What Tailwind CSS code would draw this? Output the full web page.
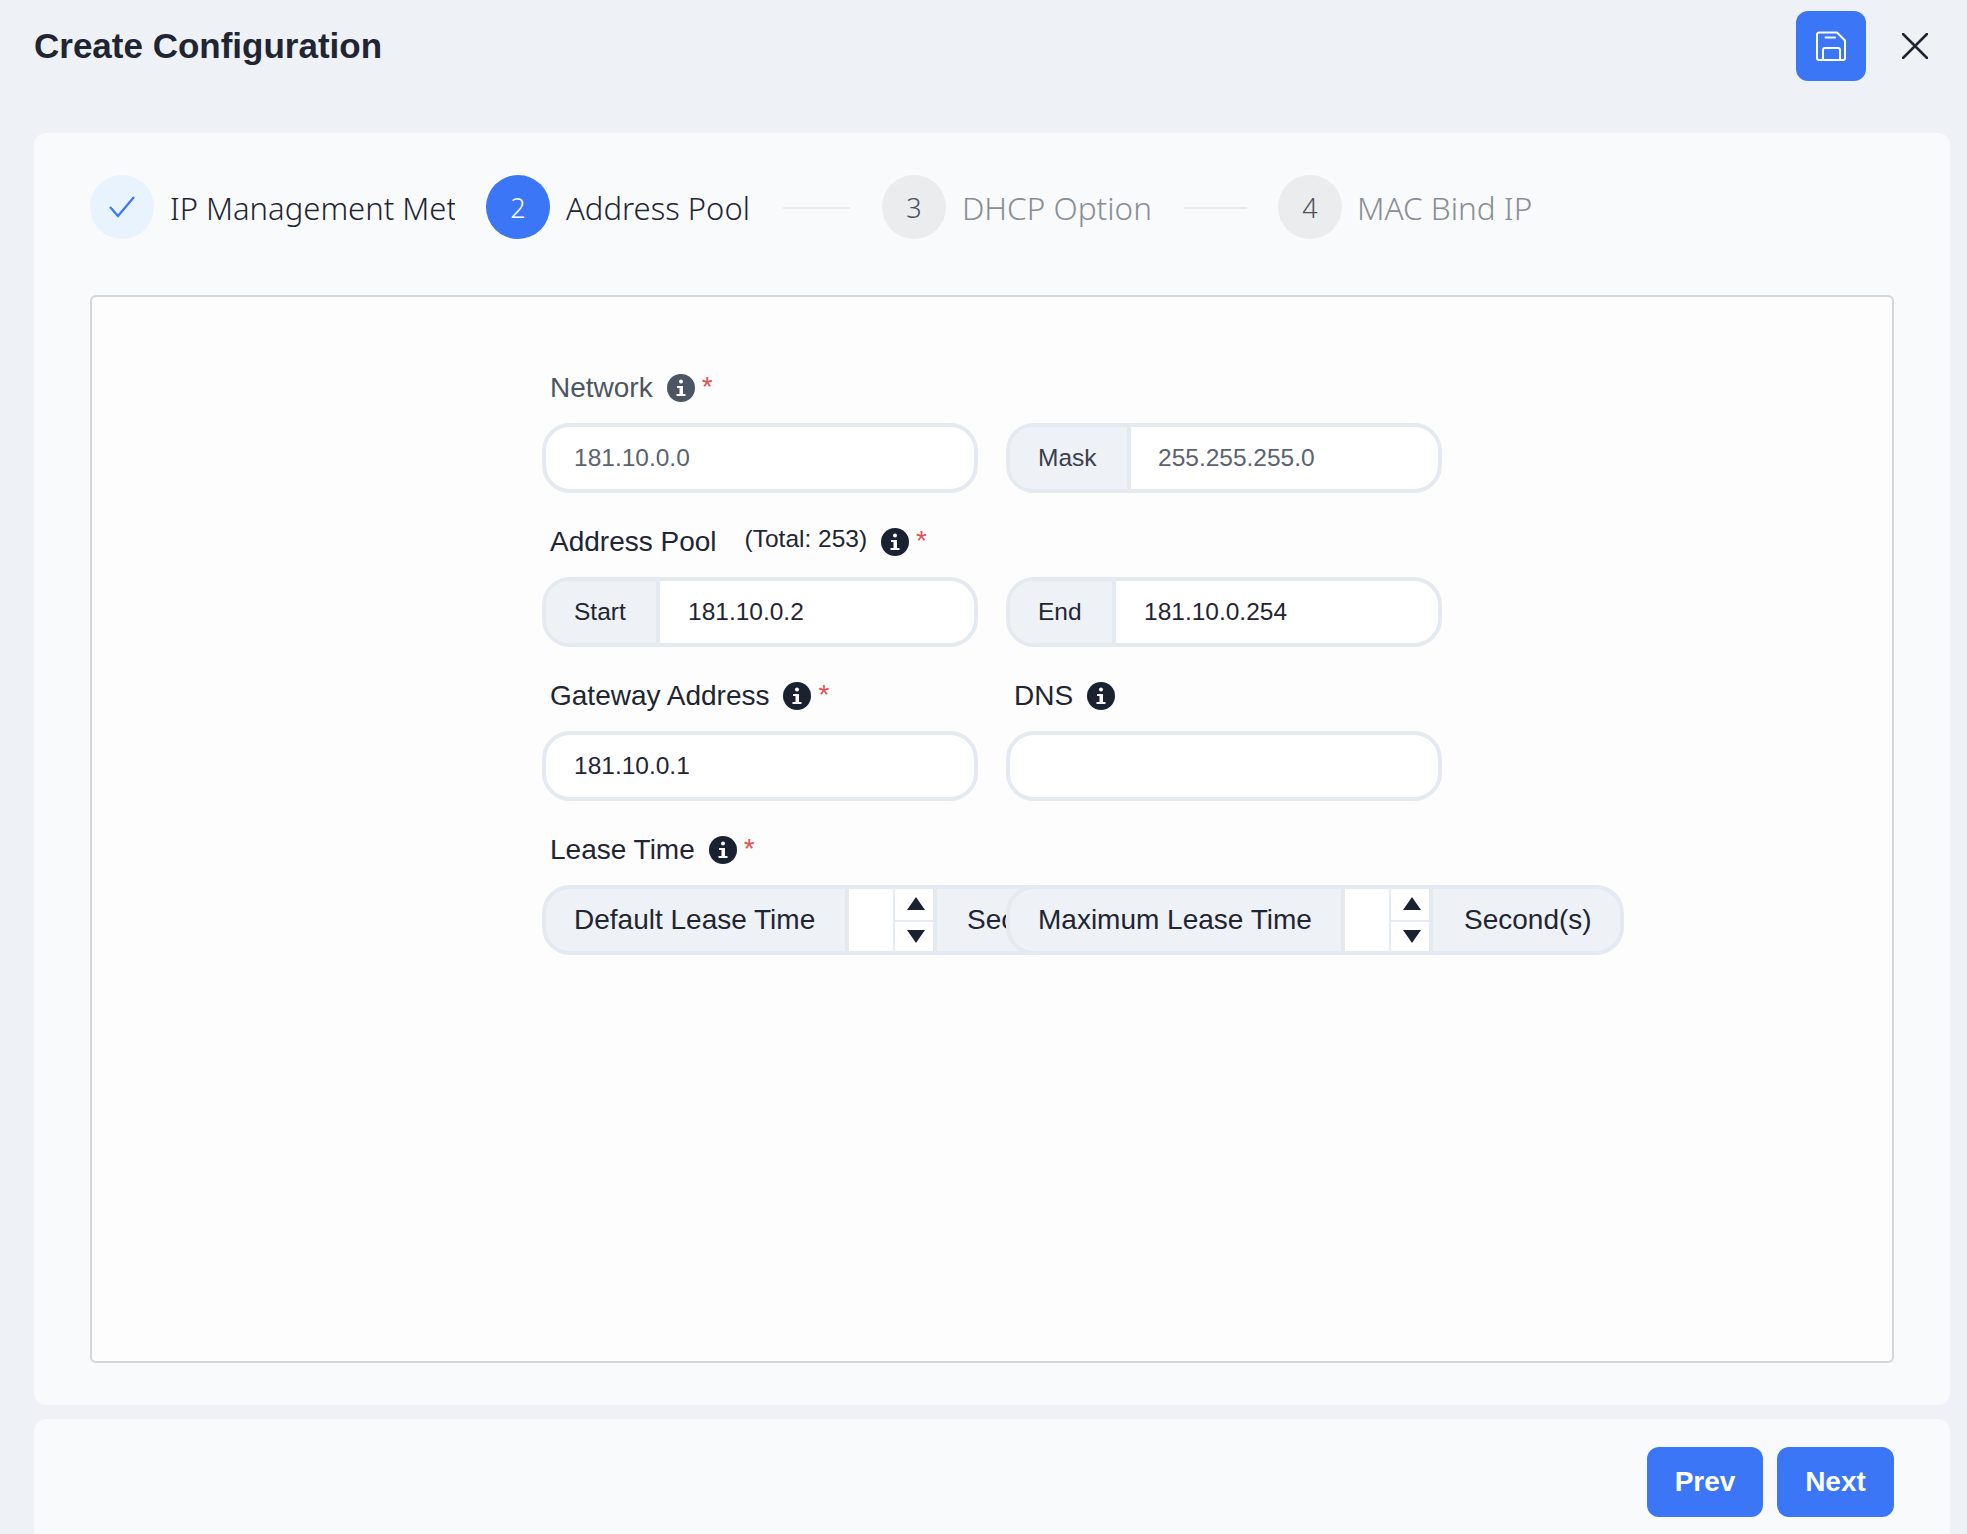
<!DOCTYPE html>
<html>
<head>
<meta charset="utf-8">
<script src="https://cdn.jsdelivr.net/npm/@tailwindcss/browser@4"></script>
</head>
<body class="m-0 h-[1534px] w-[1967px] overflow-hidden bg-[#eef1f6] font-['Liberation_Sans',sans-serif] text-[#1f2533]">
<header class="h-[106px] border-b-2 border-[#f0f1f4] pl-[34px] pr-[39px] flex items-start justify-between">
  <h1 class="m-0 mt-[23px] text-[35px] leading-[46px] font-bold">Create Configuration</h1>
  <div class="flex items-center mt-[11px]">
    <button class="w-[70px] h-[70px] rounded-xl bg-[#3b76f6] flex items-center justify-center">
      <svg width="30" height="30" viewBox="0 0 30 30" fill="none" stroke="#fff" stroke-width="2" stroke-linejoin="round" stroke-linecap="round"><path d="M3 1.500H21L29 9.500V27A2 2 0 0 1 27 29H3A2 2 0 0 1 1 27V3.500A2 2 0 0 1 3 1.500Z"/><path d="M7 29V19A2 2 0 0 1 9 17H22A2 2 0 0 1 24 19V29"/><path d="M9.500 6.500H19"/></svg>
    </button>
    <button class="ml-[36px] w-[26px] h-[26px] flex items-center justify-center">
      <svg width="26" height="26" viewBox="0 0 26 26" fill="none" stroke="#1f2533" stroke-width="2.500" stroke-linecap="round"><path d="M1 1L25 25M25 1L1 25"/></svg>
    </button>
  </div>
</header>
<main class="pt-[27px] pl-[34px] w-[1950px]">
  <section class="h-[1272px] bg-[#f9fafc] rounded-xl px-[56px] pt-[42px] pb-[42px] flex flex-col">
    <nav class="flex items-center h-[64px] font-['Noto_Sans',sans-serif] text-[31px] font-light">
      <div class="w-16 h-16 rounded-full bg-[#e9f3fe] flex items-center justify-center shrink-0">
        <svg width="26" height="22" viewBox="0 0 26 22" fill="none" stroke="#3b76f6" stroke-width="2.200"><path d="M1 11L9 20L25 1"/></svg>
      </div>
      <div class="ml-[16px] mt-[2px] w-[285px] overflow-hidden whitespace-nowrap text-[#1f2533]">IP Management Method</div>
      <div class="ml-[31px] w-16 h-16 pt-[2px] rounded-full bg-[#3b76f6] text-white text-[27px] flex items-center justify-center shrink-0">2</div>
      <div class="ml-[16px] mt-[2px] whitespace-nowrap text-[#1f2533]">Address Pool</div>
      <div class="ml-[33px] mt-[1px] w-[67px] h-[2px] bg-[#e8eaed]"></div>
      <div class="ml-[32px] w-16 h-16 pt-[2px] rounded-full bg-[#ebecee] text-[#4b4f57] text-[27px] flex items-center justify-center shrink-0">3</div>
      <div class="ml-[16px] mt-[2px] whitespace-nowrap text-[#8a8d93] text-[31.500px]">DHCP Option</div>
      <div class="ml-[32px] mt-[1px] w-[63px] h-[2px] bg-[#e8eaed]"></div>
      <div class="ml-[31px] w-16 h-16 pt-[2px] rounded-full bg-[#ebecee] text-[#4b4f57] text-[27px] flex items-center justify-center shrink-0">4</div>
      <div class="ml-[15px] mt-[2px] whitespace-nowrap text-[#8a8d93] text-[31.500px]">MAC Bind IP</div>
    </nav>
    <div class="mt-[56px] flex-1 border-2 border-[#d6d6d6] rounded-md bg-[#fdfdfd] pl-[450px] pt-[42px]">
      <div class="grid grid-cols-[436px_436px] gap-x-[28px] text-[28px]">

        <div class="h-[84px] pt-[28px] pb-[14px] pl-2 flex items-center text-[#4b5563]">
          <span>Network</span>
          <span class="ml-[14px] w-[28px] h-[28px] rounded-full bg-[#4b5563] flex items-center justify-center"><svg width="12" height="18" viewBox="0 0 12 18" fill="#fff"><circle cx="6" cy="2.500" r="2"/><path d="M2 7H8V15H10.500V17H1.500V15H4.500V9H2Z"/></svg></span>
          <span class="ml-[7px] -mt-[2px] text-[#e05252] text-[28px] leading-none">*</span>
        </div>
        <div class="h-[84px]"></div>
        <div class="h-[70px] border-4 border-[#e5e9f0] rounded-[28px] bg-white flex items-center pl-[28px] text-[24.500px] text-[#5b6270]">181.10.0.0</div>
        <div class="h-[70px] border-4 border-[#e5e9f0] rounded-[28px] bg-white flex items-center overflow-hidden text-[24.500px]">
          <span class="h-full w-[121px] shrink-0 bg-[#eef1f6] border-r-4 border-[#e5e9f0] flex items-center pl-[28px] text-[#3a404d]">Mask</span>
          <span class="pl-[27px] text-[#5b6270]">255.255.255.0</span>
        </div>

        <div class="h-[84px] pt-[28px] pb-[14px] pl-2 flex items-center">
          <span>Address Pool</span>
          <span class="ml-[28px] -mt-[6px] text-[24.500px]">(Total: 253)</span>
          <span class="ml-[14px] w-[28px] h-[28px] rounded-full bg-[#1a2130] flex items-center justify-center"><svg width="12" height="18" viewBox="0 0 12 18" fill="#fff"><circle cx="6" cy="2.500" r="2"/><path d="M2 7H8V15H10.500V17H1.500V15H4.500V9H2Z"/></svg></span>
          <span class="ml-[7px] -mt-[2px] text-[#e05252] text-[28px] leading-none">*</span>
        </div>
        <div class="h-[84px]"></div>
        <div class="h-[70px] border-4 border-[#e5e9f0] rounded-[28px] bg-white flex items-center overflow-hidden text-[24.500px]">
          <span class="h-full w-[114px] shrink-0 bg-[#eef1f6] border-r-4 border-[#e5e9f0] flex items-center pl-[28px]">Start</span>
          <span class="pl-[28px]">181.10.0.2</span>
        </div>
        <div class="h-[70px] border-4 border-[#e5e9f0] rounded-[28px] bg-white flex items-center overflow-hidden text-[24.500px]">
          <span class="h-full w-[106px] shrink-0 bg-[#eef1f6] border-r-4 border-[#e5e9f0] flex items-center pl-[28px]">End</span>
          <span class="pl-[28px]">181.10.0.254</span>
        </div>

        <div class="h-[84px] pt-[28px] pb-[14px] pl-2 flex items-center">
          <span>Gateway Address</span>
          <span class="ml-[14px] w-[28px] h-[28px] rounded-full bg-[#1a2130] flex items-center justify-center"><svg width="12" height="18" viewBox="0 0 12 18" fill="#fff"><circle cx="6" cy="2.500" r="2"/><path d="M2 7H8V15H10.500V17H1.500V15H4.500V9H2Z"/></svg></span>
          <span class="ml-[7px] -mt-[2px] text-[#e05252] text-[28px] leading-none">*</span>
        </div>
        <div class="h-[84px] pt-[28px] pb-[14px] pl-2 flex items-center">
          <span>DNS</span>
          <span class="ml-[14px] w-[28px] h-[28px] rounded-full bg-[#1a2130] flex items-center justify-center"><svg width="12" height="18" viewBox="0 0 12 18" fill="#fff"><circle cx="6" cy="2.500" r="2"/><path d="M2 7H8V15H10.500V17H1.500V15H4.500V9H2Z"/></svg></span>
        </div>
        <div class="h-[70px] border-4 border-[#e5e9f0] rounded-[28px] bg-white flex items-center pl-[28px] text-[24.500px]">181.10.0.1</div>
        <div class="h-[70px] border-4 border-[#e5e9f0] rounded-[28px] bg-white"></div>

        <div class="h-[84px] pt-[28px] pb-[14px] pl-2 flex items-center">
          <span>Lease Time</span>
          <span class="ml-[14px] w-[28px] h-[28px] rounded-full bg-[#1a2130] flex items-center justify-center"><svg width="12" height="18" viewBox="0 0 12 18" fill="#fff"><circle cx="6" cy="2.500" r="2"/><path d="M2 7H8V15H10.500V17H1.500V15H4.500V9H2Z"/></svg></span>
          <span class="ml-[7px] -mt-[2px] text-[#e05252] text-[28px] leading-none">*</span>
        </div>
        <div class="h-[84px]"></div>

        <div class="h-[70px] w-max border-4 border-[#e5e9f0] rounded-[28px] bg-[#eef1f6] flex items-stretch whitespace-nowrap">
          <span class="w-[303px] border-r-4 border-[#e5e9f0] flex items-center pl-[28px]">Default Lease Time</span>
          <span class="w-[44px] bg-white"></span>
          <span class="w-[2px] bg-[#e5e9f0]"></span>
          <span class="w-[38px] flex flex-col bg-white">
            <span class="flex-1 flex items-center justify-center pl-[3px] pb-[2px]"><svg width="18" height="13" viewBox="0 0 18 13" fill="#1a2130"><path d="M9 0L18 13H0Z"/></svg></span>
            <span class="h-[2px] bg-[#e5e9f0]"></span>
            <span class="flex-1 flex items-center justify-center pl-[3px]"><svg width="18" height="13" viewBox="0 0 18 13" fill="#1a2130"><path d="M9 13L18 0H0Z"/></svg></span>
          </span>
          <span class="border-l-4 border-[#e5e9f0] flex items-center pl-[30px] pr-[29px]">Second(s)</span>
        </div>
        <div class="relative h-[70px] w-max border-4 border-[#e5e9f0] rounded-[28px] bg-[#eef1f6] flex items-stretch whitespace-nowrap">
          <span class="w-[335px] border-r-4 border-[#e5e9f0] flex items-center pl-[28px]">Maximum Lease Time</span>
          <span class="w-[44px] bg-white"></span>
          <span class="w-[2px] bg-[#e5e9f0]"></span>
          <span class="w-[38px] flex flex-col bg-white">
            <span class="flex-1 flex items-center justify-center pl-[3px] pb-[2px]"><svg width="18" height="13" viewBox="0 0 18 13" fill="#1a2130"><path d="M9 0L18 13H0Z"/></svg></span>
            <span class="h-[2px] bg-[#e5e9f0]"></span>
            <span class="flex-1 flex items-center justify-center pl-[3px]"><svg width="18" height="13" viewBox="0 0 18 13" fill="#1a2130"><path d="M9 13L18 0H0Z"/></svg></span>
          </span>
          <span class="border-l-4 border-[#e5e9f0] flex items-center pl-[31px] pr-[28px]">Second(s)</span>
        </div>
      </div>
    </div>
  </section>
  <footer class="mt-[14px] h-[130px] bg-[#f9fafc] rounded-xl pt-[28px] pr-[56px] flex justify-end items-start gap-[14px]">
    <button class="w-[116px] h-[70px] rounded-xl bg-[#3b76f6] text-white text-[28px] font-bold">Prev</button>
    <button class="w-[117px] h-[70px] rounded-xl bg-[#3b76f6] text-white text-[28px] font-bold">Next</button>
  </footer>
</main>
</body>
</html>
